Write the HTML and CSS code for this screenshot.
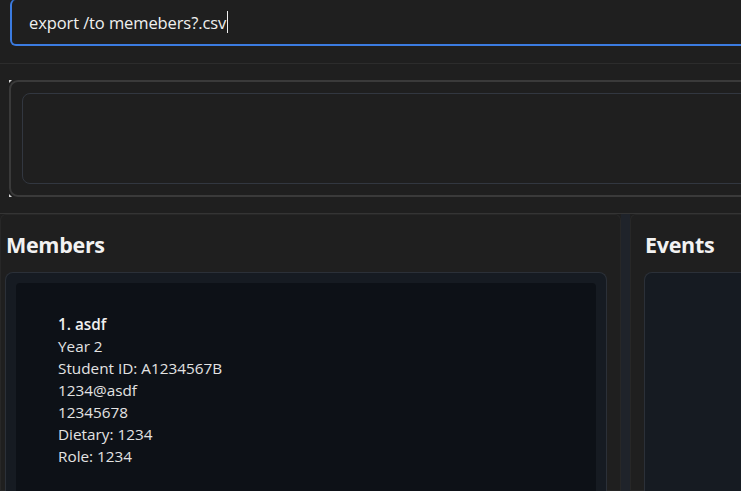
FILE: index.html
```html
<!DOCTYPE html>
<html>
<head>
<meta charset="utf-8">
<link rel="stylesheet" href="styles.css">
</head>
<body>
<div class="app">
  <div class="command-area">
    <div class="command-box"><span class="command-text">export /to memebers?.csv</span><span class="caret"></span></div>
  </div>
  <div class="rule"></div>
  <div class="result-area">
    <div class="result-outer">
      <div class="result-inner"></div>
    </div>
  </div>
  <div class="panels">
    <section class="panel members">
      <h2 class="panel-title">Members</h2>
      <div class="card">
        <div class="list">
          <div class="entry">
            <div class="entry-name">1. asdf</div>
            <div>Year 2</div>
            <div>Student ID: A1234567B</div>
            <div>1234@asdf</div>
            <div>12345678</div>
            <div>Dietary: 1234</div>
            <div>Role: 1234</div>
          </div>
        </div>
      </div>
    </section>
    <div class="divider"></div>
    <section class="panel events">
      <h2 class="panel-title">Events</h2>
      <div class="card card-empty"></div>
    </section>
  </div>
</div>
</body>
</html>
```

FILE: styles.css
```css
html, body {
  margin: 0;
  padding: 0;
  background: #1f1f1f;
}
body {
  font-family: "Open Sans", "Noto Sans", sans-serif;
  color: #e6e6e6;
}
.app {
  width: 741px;
  height: 491px;
  overflow: hidden;
  display: flex;
  flex-direction: column;
}
.command-area {
  padding: 0 0 0 10px;
  height: 47px;
  margin-right: -40px;
  flex: none;
}
.command-box {
  box-sizing: border-box;
  height: 47px;
  border: 2px solid #3b7be0;
  border-top-color: #3060b0;
  border-top-width: 1px;
  border-radius: 6px;
  background: #1f1f1f;
  display: flex;
  align-items: center;
  padding-left: 17px;
  margin-top: -1px;
}
.command-text {
  font-size: 16.5px;
  color: #f0f0f0;
  letter-spacing: -0.1px;
}
.caret {
  display: inline-block;
  width: 1px;
  height: 22px;
  background: #f0f0f0;
  margin-left: 1px;
}
.rule {
  flex: none;
  margin-top: 16px;
  height: 1px;
  background: #2c2c2c;
}
.result-area {
  flex: none;
  padding: 16px 0 16px 9px;
  margin-right: -40px;
}
.result-outer {
  position: relative;
  box-sizing: border-box;
  height: 117px;
  border: 2px solid #3a3a3a;
  border-radius: 9px;
  padding: 11px 0 11px 11px;
}
.result-outer::before,
.result-outer::after {
  content: "";
  position: absolute;
  left: -2px;
  width: 3px;
  height: 3px;
  background: #d8d8d8;
}
.result-outer::before {
  top: -2px;
  clip-path: polygon(0 0, 100% 0, 0 100%);
}
.result-outer::after {
  bottom: -2px;
  clip-path: polygon(0 0, 100% 100%, 0 100%);
}
.result-inner {
  height: 91px;
  box-sizing: border-box;
  border: 1px solid #323740;
  border-radius: 8px;
}
.panels {
  flex: 1;
  min-height: 0;
  border-top: 1px solid #343434;
  display: flex;
  margin-right: -40px;
}
.panel {
  background: #1f1f1f;
  border-radius: 6px 6px 0 0;
  box-shadow: inset 0 0 0 1px #272727;
  display: flex;
  flex-direction: column;
  min-height: 0;
}
.members {
  width: 621px;
  flex: none;
  padding-left: 5px;
  box-sizing: border-box;
}
.events {
  flex: 1;
  padding-left: 14px;
}
.divider {
  width: 9px;
  flex: none;
  background: #1f232a;
}
.panel-title {
  margin: 0;
  font-size: 21.5px;
  font-weight: 700;
  color: #f2f2f2;
  padding: 16px 0 0 1px;
  height: 41px;
  line-height: 30px;
  box-sizing: border-box;
  letter-spacing: -0.3px;
  flex: none;
}
.card {
  margin-top: 17px;
  box-sizing: border-box;
  background: #161b22;
  border: 1px solid #2b3038;
  border-bottom: none;
  border-radius: 8px 8px 0 0;
  padding: 10px 10px 0 10px;
  flex: 1;
  min-height: 0;
}
.members .card {
  width: 602px;
}
.list {
  background: #0d1117;
  border-radius: 4px 4px 0 0;
  height: 100%;
  padding: 30px 0 0 42px;
  box-sizing: border-box;
}
.entry {
  font-size: 15.3px;
  line-height: 22px;
  color: #e3e3e3;
}
.entry-name {
  font-weight: 600;
  color: #f0f0f0;
}
```
